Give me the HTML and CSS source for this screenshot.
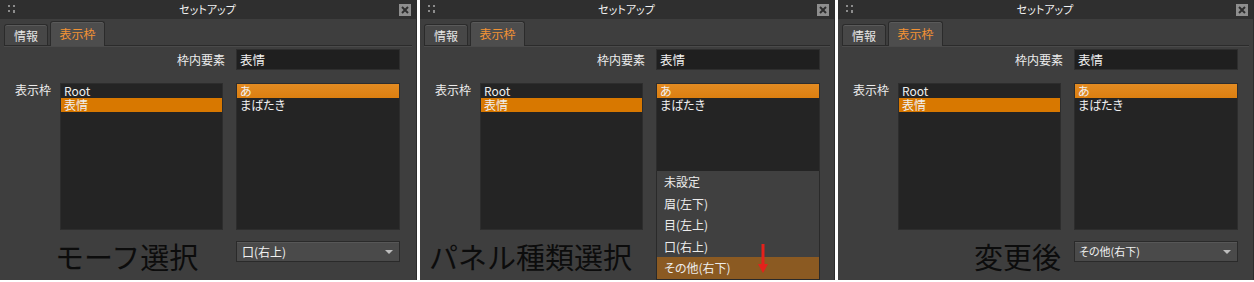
FILE: index.html
```html
<!DOCTYPE html>
<html lang="ja">
<head>
  <meta charset="UTF-8">
  <title>セットアップ 表示枠</title>
  <link rel="stylesheet" href="styles.css">
</head>
<body>

<div class="shots">

  <!-- 1: モーフ選択 -->
  <section class="panel w1">
    <header class="titlebar">
      <svg class="grip" width="8" height="9" viewBox="0 0 8 9"><rect x="0" y="0" width="2" height="2"/><rect x="5" y="0" width="2" height="2"/><rect x="0" y="5" width="2" height="2"/><rect x="5" y="5" width="2" height="3"/></svg>
      <span class="title">セットアップ</span>
      <span class="close"><svg width="12" height="12" viewBox="0 0 12 12"><path d="M3 3 L9 9 M9 3 L3 9"/></svg></span>
    </header>
    <nav class="tabs">
      <span class="tab">情報</span>
      <span class="tab active">表示枠</span>
    </nav>
    <div class="form">
      <label class="lbl-field">枠内要素</label>
      <div class="input">表情</div>
      <label class="lbl-list">表示枠</label>
      <ul class="list">
        <li>Root</li>
        <li class="sel">表情</li>
      </ul>
      <ul class="list">
        <li class="sel alt">あ</li>
        <li>まばたき</li>
      </ul>
      <div class="select">口(右上)<span class="caret"></span></div>
    </div>
    <div class="note n1">モーフ選択</div>
  </section>

  <!-- 2: パネル種類選択 -->
  <section class="panel w2">
    <header class="titlebar">
      <svg class="grip" width="8" height="9" viewBox="0 0 8 9"><rect x="0" y="0" width="2" height="2"/><rect x="5" y="0" width="2" height="2"/><rect x="0" y="5" width="2" height="2"/><rect x="5" y="5" width="2" height="3"/></svg>
      <span class="title">セットアップ</span>
      <span class="close"><svg width="12" height="12" viewBox="0 0 12 12"><path d="M3 3 L9 9 M9 3 L3 9"/></svg></span>
    </header>
    <nav class="tabs">
      <span class="tab">情報</span>
      <span class="tab active">表示枠</span>
    </nav>
    <div class="form">
      <label class="lbl-field">枠内要素</label>
      <div class="input">表情</div>
      <label class="lbl-list">表示枠</label>
      <ul class="list">
        <li>Root</li>
        <li class="sel">表情</li>
      </ul>
      <ul class="list">
        <li class="sel alt">あ</li>
        <li>まばたき</li>
      </ul>
      <div class="select open">口(右上)<span class="caret"></span></div>
    </div>
    <ul class="popup">
      <li>未設定</li>
      <li>眉(左下)</li>
      <li>目(左上)</li>
      <li>口(右上)</li>
      <li class="hot">その他(右下)</li>
    </ul>
    <svg class="arrow" width="12" height="30" viewBox="0 0 12 30"><path d="M6 0 V22" stroke="#e5211b" stroke-width="3"/><path d="M1 20 L6 29 L11 20 Z" fill="#e5211b"/></svg>
    <div class="note n2">パネル種類選択</div>
  </section>

  <!-- 3: 変更後 -->
  <section class="panel w3">
    <header class="titlebar">
      <svg class="grip" width="8" height="9" viewBox="0 0 8 9"><rect x="0" y="0" width="2" height="2"/><rect x="5" y="0" width="2" height="2"/><rect x="0" y="5" width="2" height="2"/><rect x="5" y="5" width="2" height="3"/></svg>
      <span class="title">セットアップ</span>
      <span class="close"><svg width="12" height="12" viewBox="0 0 12 12"><path d="M3 3 L9 9 M9 3 L3 9"/></svg></span>
    </header>
    <nav class="tabs">
      <span class="tab">情報</span>
      <span class="tab active">表示枠</span>
    </nav>
    <div class="form">
      <label class="lbl-field">枠内要素</label>
      <div class="input">表情</div>
      <label class="lbl-list">表示枠</label>
      <ul class="list">
        <li>Root</li>
        <li class="sel">表情</li>
      </ul>
      <ul class="list">
        <li class="sel alt">あ</li>
        <li>まばたき</li>
      </ul>
      <div class="select small">その他(右下)<span class="caret"></span></div>
    </div>
    <div class="note n3">変更後</div>
  </section>

</div>

</body>
</html>
```

FILE: styles.css
```css
body {
  margin: 0;
  background: #fff;
  font-family: "Noto Sans CJK JP", "Noto Sans", sans-serif;
  font-feature-settings: "palt";
  font-size: 12px;
  color: #e8e8e8;
}
ul {
  list-style: none;
  margin: 0;
  padding: 0;
}
.shots {
  display: flex;
  gap: 3px;
}
.panel {
  position: relative;
  height: 280px;
  background: #3e3e3e;
  border-right: 1px solid #2c2c2c;
  box-sizing: border-box;
  overflow: hidden;
}
.w1 { width: 417px; }
.w2 { width: 415px; }
.w3 { width: 416px; }

/* title bar */
.titlebar {
  height: 19px;
  background: #2f2f2f;
  display: flex;
  align-items: center;
  padding: 0 5px 0 8px;
}
.grip {
  fill: #8c8c8c;
}
.title {
  flex: 1;
  text-align: center;
  font-size: 11px;
  color: #f2f2f2;
  line-height: 19px;
}
.close {
  width: 12px;
  height: 12px;
  background: #8e8e8e;
  display: flex;
}
.close path {
  stroke: #2e2e2e;
  stroke-width: 2;
}

/* tabs */
.tabs {
  height: 26px;
  margin: 0 4px;
  display: flex;
  align-items: flex-end;
  gap: 2px;
  border-bottom: 1px solid #2b2b2b;
  box-shadow: 0 1px 0 #4a4a4a;
}
.tab {
  width: 44px;
  height: 21px;
  box-sizing: border-box;
  background: #474747;
  border: 1px solid #2b2b2b;
  border-bottom: none;
  border-radius: 3px 3px 0 0;
  box-shadow: inset 0 1px 0 #5a5a5a;
  text-align: center;
  line-height: 21px;
  font-size: 12px;
  color: #e4e4e4;
}
.tab.active {
  width: 55px;
  height: 25px;
  line-height: 23px;
  margin-bottom: -1px;
  background: #4d4d4d;
  color: #f39234;
}

/* form grid: label | list | list */
.form {
  display: grid;
  grid-template-columns: 32px 163px 164px;
  grid-template-rows: 21px 147px 21px;
  column-gap: 13px;
  row-gap: 12px;
  padding: 3px 0 0 15px;
}
.lbl-field {
  grid-column: 1 / 3;
  text-align: right;
  margin-right: -2px;
  line-height: 21px;
  color: #ececec;
}
.lbl-list {
  padding-top: 1px;
  line-height: 14px;
  white-space: nowrap;
  color: #ececec;
}
.input {
  background: #1f1f1f;
  border: 1px solid #2e2e2e;
  padding-left: 3px;
  line-height: 19px;
  font-size: 12.5px;
  color: #f0f0f0;
}
.list {
  background: #242424;
  border: 1px solid #2d2d2d;
  margin-top: 1px;
  margin-bottom: -1px;
}
.list li {
  height: 14px;
  line-height: 14px;
  padding-left: 3px;
  color: #f0f0f0;
}
.list li.sel {
  background: #d87800;
}
.list li.sel.alt {
  background: linear-gradient(#e38b22, #dc7f10);
}
.select {
  grid-column: 3;
  position: relative;
  background: #4a4a4a;
  border: 1px solid #2a2a2a;
  box-shadow: inset 0 1px 0 #575757;
  padding-left: 5px;
  line-height: 19px;
  color: #f0f0f0;
}
.select.small {
  font-size: 11px;
  padding-left: 4px;
}
.select.open {
  visibility: hidden;
}
.caret {
  position: absolute;
  right: 6px;
  top: 8px;
  border-left: 4px solid transparent;
  border-right: 4px solid transparent;
  border-top: 4px solid #bdbdbd;
}

/* open dropdown */
.popup {
  position: absolute;
  left: 236px;
  top: 171px;
  width: 164px;
  box-sizing: border-box;
  background: #404040;
  border: 1px solid #2a2a2a;
  border-top: none;
}
.popup li {
  height: 21.5px;
  line-height: 21.5px;
  padding-left: 7px;
  color: #ececec;
}
.popup li.hot {
  background: #8b5a22;
}
.arrow {
  position: absolute;
  left: 337px;
  top: 244px;
}

/* annotation */
.note {
  position: absolute;
  top: 240px;
  font-size: 29px;
  line-height: 32px;
  font-feature-settings: normal;
  color: #0c0c0c;
}
.n1 { left: 55px; }
.n2 { left: 9px; }
.n3 { left: 136px; }
```
